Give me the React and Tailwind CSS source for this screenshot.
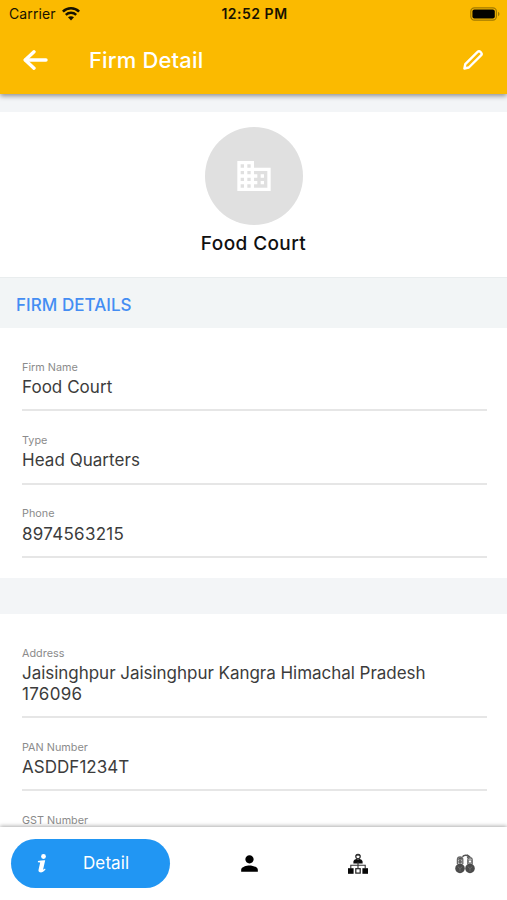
import { MdDomain, MdPerson } from 'react-icons/md';

function Field({ label, children, spacing = 'tracking-[0.04px]' }) {
  return (
    <div className="mr-5 ml-[22px] border-b-2 border-[#e6e6e6] pt-[22.6px] pb-[11.3px]">
      <div className="h-[14px] text-[10.8px] leading-[14px] tracking-[0.02px] text-[#8b8b8b]">{label}</div>
      <div className={`mt-[2.6px] text-[17px] leading-[20.8px] text-[#3c3c3c] ${spacing}`}>{children}</div>
    </div>
  );
}

function WifiIcon() {
  return (
    <svg className="ml-[6px] h-[14px] w-[18px]" viewBox="0 0 18 14" fill="none" stroke="#171200">
      <path d="M.9 4.6C5.4.2 12.6.2 17.1 4.6" strokeWidth="2.6" />
      <path d="M3.8 7.8C6.7 5 11.3 5 14.2 7.8" strokeWidth="2.4" />
      <path d="M9 13.4 6 10.3C7.7 8.8 10.3 8.8 12 10.3Z" fill="#171200" stroke="none" />
    </svg>
  );
}

function BatteryIcon() {
  return (
    <svg className="h-[14px] w-[30px]" viewBox="0 0 30 14">
      <rect x=".8" y=".8" width="25.6" height="12.4" rx="3.6" fill="none" stroke="#a17a00" strokeWidth="1.2" />
      <rect x="2.4" y="2.4" width="22.4" height="9.2" rx="2" fill="#050400" />
      <path d="M28 4.8c2 .8 2 3.6 0 4.4Z" fill="#a17a00" />
    </svg>
  );
}

function OrgIcon() {
  return (
    <svg className="h-[22px] w-[22px]" viewBox="0 0 22 22">
      <circle cx="11" cy="3.5" r="2.2" fill="#fff" stroke="#222" strokeWidth="1.1" />
      <path d="M8.5 3.4C8.6.4 13.4.4 13.5 3.4L11 2.6Z" fill="#333" />
      <path d="M6.4 10.4V8.6C6.4 7 8.2 6.1 9.7 5.9L11 6.6 12.3 5.9C13.8 6.1 15.6 7 15.6 8.6V10.4Z" fill="#0c0c0c" />
      <path d="M11 9v6M3.8 15.5V12.3H18.2V15.5" fill="none" stroke="#333" strokeWidth="1.1" />
      <rect x="1" y="15.2" width="5.6" height="5.6" fill="#080808" />
      <rect x="15.4" y="15.2" width="5.6" height="5.6" fill="#080808" />
      <rect x="8.8" y="15.7" width="4.4" height="4.4" fill="#fff" stroke="#222" strokeWidth="1.2" />
    </svg>
  );
}

function PartnersIcon() {
  return (
    <svg className="h-[20px] w-[20px]" viewBox="0 0 20 20" fill="none">
      <path d="M2.4 10V5.6C2.4 2 7.8 2 7.8 5.6V10M12.8 10V6C12.8 3 17.2 3 17.2 6V10" stroke="#686868" strokeWidth="1.3" />
      <path d="M2.8 5.7C3.8 2.4 6.7 2.4 7.5 5.7Z" fill="#555" />
      <path d="M7.5 2.7C9 1 12 .9 14.2 2.4M11.8.9l2.5 1.5-2.2 1.3" stroke="#555" strokeWidth="1.5" />
      <circle cx="5.1" cy="7.7" r="1.9" fill="#666" />
      <circle cx="15" cy="7.5" r="1.7" stroke="#666" />
      <circle cx="5" cy="14.4" r="4.8" fill="#4b4b4b" />
      <circle cx="15" cy="14.4" r="4.8" fill="#4b4b4b" />
      <path d="M2.7 12.5 5 14.7 7.3 12.5M12.7 12.5 15 14.7 17.3 12.5M5 14.5v3M15 14.5v3" stroke="#777" strokeWidth=".7" />
    </svg>
  );
}

export default function App() {
  return (
    <div className="flex h-[900px] w-[507px] flex-col overflow-hidden bg-white font-['Inter',sans-serif]">
      <header className="z-10 h-[94px] shrink-0 bg-[#fbba00] shadow-[0_2px_5px_rgba(0,0,0,0.42)]">
        <div className="grid h-[27px] grid-cols-3 items-center pr-[7px] pl-[9px] text-[14px] text-[#171200]">
          <div className="flex items-center">
            <span className="tracking-[0.1px]">Carrier</span>
            <WifiIcon />
          </div>
          <span className="text-center text-[14px] font-semibold tracking-[0.5px]">12:52 PM</span>
          <div className="flex justify-end"><BatteryIcon /></div>
        </div>
        <div className="flex h-[66px] items-center pr-6 pl-[23px]">
          <svg className="h-[20px] w-[25px]" viewBox="0 0 25 20" fill="none" stroke="#fff" strokeWidth="3.4" strokeLinecap="round" strokeLinejoin="round">
            <path d="M11 1.8 2.2 10 11 18.2" />
            <path d="M2.5 10H23" />
          </svg>
          <h1 className="ml-[41px] flex-1 text-[22px] font-medium tracking-[0.15px] text-white">Firm Detail</h1>
          <svg className="h-[20px] w-[20px]" viewBox="0 0 20 20" fill="none" stroke="#fff" strokeWidth="2.4" strokeLinejoin="round">
            <path d="M1.4 18.5 2.3 14.1 14.6 1.9C15.5 1 16.5 1 17.4 1.9L18 2.5C18.9 3.4 18.9 4.4 18 5.3L5.8 17.5Z" />
          </svg>
        </div>
      </header>

      <main className="min-h-0 flex-1 overflow-hidden">
        <div className="h-[18px] bg-[#f3f5f7]" />
        <section className="flex h-[165px] flex-col items-center pt-[15px]">
          <div className="flex h-[98px] w-[98px] items-center justify-center rounded-full bg-[#e0e0e0]">
            <MdDomain className="h-[40px] w-[40px] text-white" />
          </div>
          <h2 className="mt-[5px] text-[19px] leading-[28px] font-medium tracking-[0.4px] text-[#101010]">Food Court</h2>
        </section>
        <h3 className="flex h-[51px] items-center border-t border-[#e9edee] bg-[#f2f5f6] pt-[6px] pl-4 text-[17px] font-medium tracking-[0.04px] text-[#448df3]">FIRM DETAILS</h3>
        <section className="h-[250px] pt-[10px]">
          <Field label="Firm Name">Food Court</Field>
          <Field label="Type">Head Quarters</Field>
          <Field label="Phone" spacing="tracking-[0.28px]">8974563215</Field>
        </section>
        <div className="h-[36px] bg-[#f3f5f7]" />
        <section className="pt-[10px]">
          <Field label="Address" spacing="tracking-[-0.03px]">Jaisinghpur Jaisinghpur Kangra Himachal Pradesh<br /><span className="tracking-[0.28px]">176096</span></Field>
          <Field label="PAN Number">ASDDF1234T</Field>
          <Field label="GST Number">&nbsp;</Field>
        </section>
      </main>

      <nav className="z-10 flex h-[73px] shrink-0 items-center bg-white pl-[11px] shadow-[0_-1px_4px_rgba(0,0,0,0.32)]">
        <div className="flex h-[49px] w-[159px] items-center rounded-full bg-[#2196f3] pl-[26px] text-white">
          <svg className="h-[19px] w-[10px]" viewBox="0 0 10 19" fill="#fff">
            <circle cx="6.5" cy="2.5" r="2.4" />
            <path d="M1 7C3.5 6.5 5.6 6.1 8.2 6.2L6.1 15.4C6.3 15.9 7 15.3 8 14.6L8.5 15.6C6.5 18 4.6 18.7 2.9 18.3C1.5 18 1.3 16.8 1.6 15.6L3.2 8.6L.8 8.3Z" />
          </svg>
          <span className="ml-[36px] text-[17px] tracking-[0.1px]">Detail</span>
        </div>
        <div className="ml-[68px] flex w-[23px] justify-center"><MdPerson className="h-[25px] w-[25px] shrink-0 text-black" /></div>
        <div className="ml-[86px]"><OrgIcon /></div>
        <div className="ml-[86px]"><PartnersIcon /></div>
      </nav>
    </div>
  );
}
